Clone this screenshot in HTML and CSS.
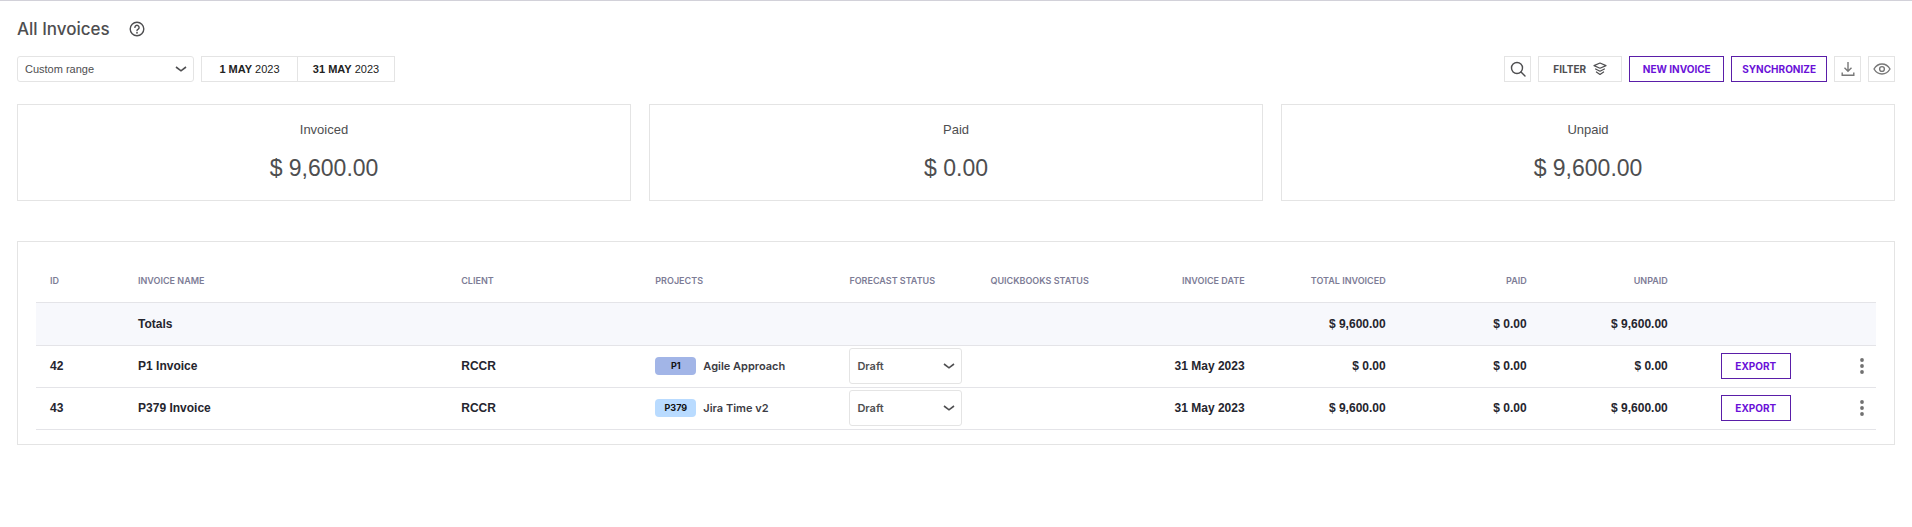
FILE: index.html
```html
<!DOCTYPE html>
<html lang="en">
<head>
<meta charset="utf-8">
<meta name="viewport" content="width=device-width, initial-scale=1">
<title>All Invoices</title>
<link rel="stylesheet" href="styles.css">
</head>
<body>
<main class="page">
  <header class="title-bar">
    <h1 class="title">All Invoices</h1>
    <button class="help" type="button" aria-label="Help">
      <svg width="16" height="16" viewBox="0 0 16 16" fill="none" stroke="currentColor" stroke-width="1.4" stroke-linecap="round"><circle cx="8" cy="8" r="6.8"/><path d="M5.9 6.4a2.1 2.1 0 1 1 3.3 1.7C8.400 8.600 8 8.900 8 9.600"/><circle cx="8" cy="11.800" r=".3"/></svg>
    </button>
  </header>

  <div class="toolbar">
    <span class="select-wrap range">
      <select class="select" aria-label="Date range"><option>Custom range</option></select>
      <svg class="chevron" width="12" height="12" viewBox="0 0 12 12"><path d="M1 4 6 7.800 11 4"/></svg>
    </span>
    <div class="dates">
      <button class="date" type="button"><b>1 MAY</b> 2023</button>
      <button class="date" type="button"><b>31 MAY</b> 2023</button>
    </div>
    <div class="actions">
      <button class="btn icon-btn" type="button" aria-label="Search">
        <svg width="16" height="16" viewBox="0 0 16 16" fill="none" stroke="currentColor" stroke-width="1.400" stroke-linecap="round"><circle cx="7" cy="7" r="5.500"/><path d="m11 11 4 4"/></svg>
      </button>
      <button class="btn filter" type="button">FILTER
        <svg width="14" height="14" viewBox="0 0 14 14" fill="none" stroke="currentColor" stroke-width="1.200" stroke-linejoin="round" stroke-linecap="round"><path d="M7 1 13 3.600 7 6.200 1 3.600z"/><path d="M2.600 7 7 9.200 11.400 7M3.400 10 7 12.400l3.600-2.400"/></svg>
      </button>
      <button class="btn primary action" type="button">NEW INVOICE</button>
      <button class="btn primary action" type="button">SYNCHRONIZE</button>
      <button class="btn icon-btn muted" type="button" aria-label="Download">
        <svg width="14" height="16" viewBox="0 0 14 16" fill="none" stroke="currentColor" stroke-width="1.400"><path d="M7 1v9M3.500 6.800 7 10.200l3.500-3.400M1.200 11.500v2.800h11.600v-2.800"/></svg>
      </button>
      <button class="btn icon-btn muted" type="button" aria-label="Visible columns">
        <svg width="18" height="14" viewBox="0 0 18 14" fill="none" stroke="currentColor" stroke-width="1.400"><path d="M1 7c2-3.300 4.700-5 8-5s6 1.700 8 5c-2 3.300-4.700 5-8 5S3 10.300 1 7z"/><circle cx="9" cy="7" r="2.400"/></svg>
      </button>
    </div>
  </div>

  <section class="cards" aria-label="Summary">
    <div class="card"><h2 class="card-label">Invoiced</h2><p class="card-value">$ 9,600.00</p></div>
    <div class="card"><h2 class="card-label">Paid</h2><p class="card-value">$ 0.00</p></div>
    <div class="card"><h2 class="card-label">Unpaid</h2><p class="card-value">$ 9,600.00</p></div>
  </section>

  <section class="panel">
    <table class="table">
      <colgroup><col class="c-id"><col class="c-name"><col class="c-wide"><col class="c-wide"><col class="c-std"><col class="c-std"><col class="c-std"><col class="c-std"><col class="c-std"><col class="c-std"><col class="c-export"><col class="c-menu"></colgroup>
      <thead>
        <tr><th>ID</th><th>INVOICE NAME</th><th>CLIENT</th><th>PROJECTS</th><th>FORECAST STATUS</th><th>QUICKBOOKS STATUS</th><th class="num">INVOICE DATE</th><th class="num">TOTAL INVOICED</th><th class="num">PAID</th><th class="num">UNPAID</th><td></td><td></td></tr>
      </thead>
      <tbody>
        <tr class="totals"><td></td><td>Totals</td><td></td><td></td><td></td><td></td><td></td><td class="num">$ 9,600.00</td><td class="num">$ 0.00</td><td class="num">$ 9,600.00</td><td></td><td></td></tr>
        <tr>
          <td>42</td><td>P1 Invoice</td><td>RCCR</td>
          <td><span class="project"><span class="badge indigo">P1</span>Agile Approach</span></td>
          <td class="status"><span class="select-wrap"><select class="select tall" aria-label="Forecast status of invoice 42"><option>Draft</option></select><svg class="chevron" width="12" height="12" viewBox="0 0 12 12"><path d="M1 4 6 7.800 11 4"/></svg></span></td>
          <td></td><td class="num">31 May 2023</td><td class="num">$ 0.00</td><td class="num">$ 0.00</td><td class="num">$ 0.00</td>
          <td class="export"><button class="btn primary" type="button">EXPORT</button></td>
          <td class="menu"><button class="dots" type="button" aria-label="More actions for invoice 42"><svg width="4" height="16" viewBox="0 0 4 16"><circle cx="2" cy="2" r="1.900"/><circle cx="2" cy="8" r="1.900"/><circle cx="2" cy="14" r="1.900"/></svg></button></td>
        </tr>
        <tr>
          <td>43</td><td>P379 Invoice</td><td>RCCR</td>
          <td><span class="project"><span class="badge sky">P379</span>Jira Time v2</span></td>
          <td class="status"><span class="select-wrap"><select class="select tall" aria-label="Forecast status of invoice 43"><option>Draft</option></select><svg class="chevron" width="12" height="12" viewBox="0 0 12 12"><path d="M1 4 6 7.800 11 4"/></svg></span></td>
          <td></td><td class="num">31 May 2023</td><td class="num">$ 9,600.00</td><td class="num">$ 0.00</td><td class="num">$ 9,600.00</td>
          <td class="export"><button class="btn primary" type="button">EXPORT</button></td>
          <td class="menu"><button class="dots" type="button" aria-label="More actions for invoice 43"><svg width="4" height="16" viewBox="0 0 4 16"><circle cx="2" cy="2" r="1.900"/><circle cx="2" cy="8" r="1.900"/><circle cx="2" cy="14" r="1.900"/></svg></button></td>
        </tr>
      </tbody>
    </table>
  </section>
</main>
</body>
</html>
```
FILE: styles.css
```css
* { box-sizing: border-box; }

body {
  margin: 0;
  background: #fff;
  color: #4e4e50;
  font-family: "Liberation Sans", Arial, sans-serif;
  font-size: 11px;
}

button, select { font: inherit; color: inherit; }
svg { display: block; flex: none; }

.title, .btn, .project, .table th, .tall {
  font-family: Inter, "Liberation Sans", sans-serif;
}

.page {
  border-top: 1px solid #d2d1d9;
  padding: 14px 17px;
}

.title-bar {
  display: flex;
  align-items: center;
  gap: 19px;
  height: 27px;
}
.title {
  margin: 0;
  font-size: 17px;
  font-weight: 500;
}
.help {
  padding: 0;
  border: 0;
  background: none;
}

.toolbar {
  display: flex;
  align-items: center;
  gap: 7px;
  margin-top: 14px;
}

.select-wrap {
  display: block;
  position: relative;
}
.range { width: 177px; }
.select {
  appearance: none;
  display: block;
  width: 100%;
  height: 26px;
  padding: 0 24px 0 7px;
  border: 1px solid #e4e4e4;
  border-radius: 3px;
  background: #fff;
}
.chevron {
  position: absolute;
  right: 7px;
  top: calc(50% - 6px);
  pointer-events: none;
  fill: none;
  stroke: #4e4e50;
  stroke-width: 1.6;
}

.dates { display: flex; }
.date {
  width: 97px;
  height: 26px;
  padding: 0;
  border: 1px solid #e4e4e4;
  background: #fff;
  color: #222;
}
.date + .date { border-left: 0; }

.actions {
  display: flex;
  gap: 7px;
  margin-left: auto;
}
.btn {
  display: inline-flex;
  align-items: center;
  justify-content: center;
  gap: 7px;
  height: 26px;
  padding: 0 10px;
  border: 1px solid #e4e4e4;
  background: #fff;
  font-size: 10px;
  font-weight: 700;
}
.icon-btn {
  width: 27px;
  padding: 0;
}
.muted { color: #777; }
.filter { width: 84px; }
.primary {
  min-width: 70px;
  border-color: #5a1ea8;
  color: #6a11d8;
}
.action { min-width: 95px; }

.cards {
  display: grid;
  grid-template-columns: repeat(3, 1fr);
  gap: 18px;
  margin-top: 22px;
}
.card {
  padding: 17px 16px 18px;
  border: 1px solid #e4e4e4;
  text-align: center;
}
.card-label {
  margin: 0;
  font-size: 13px;
  line-height: 16px;
  font-weight: 400;
}
.card-value {
  margin: 16px 0 0;
  font-size: 23px;
  line-height: 28px;
}

.panel {
  margin-top: 40px;
  padding: 18px 18px 14px;
  border: 1px solid #e4e4e4;
}
.table {
  width: 100%;
  table-layout: fixed;
  border-collapse: collapse;
  color: #25252e;
  font-size: 12px;
  font-weight: 700;
}
.c-id { width: 88px; }
.c-name { width: 323px; }
.c-wide { width: 194px; }
.c-std { width: 141px; }
.c-export { width: 148px; }
.c-menu { width: 46px; }

.table th, .table td {
  height: 42px;
  padding: 0 14px;
  border-bottom: 1px solid #e4e4e8;
  text-align: left;
  white-space: nowrap;
}
.table .totals td { height: 43px; }
.table th {
  color: #7d7c96;
  font-size: 9px;
  font-weight: 600;
}
.table .num { text-align: right; }
.totals { background: #f7f8fc; }

.project {
  display: flex;
  align-items: center;
  gap: 7px;
  color: #3c3c44;
  font-size: 11px;
  font-weight: 600;
}
.badge {
  width: 41px;
  border-radius: 4px;
  color: #111;
  font-size: 9px;
  font-weight: 700;
  line-height: 18px;
  text-align: center;
}
.indigo { background: #a2b5e7; }
.sky { background: #b9dbff; }

.tall {
  height: 36px;
  color: #4e4e50;
  font-size: 11px;
  font-weight: 600;
}
.table .export { padding: 0; text-align: center; }
.table .menu { padding: 0 12px 0 0; }
.dots {
  display: block;
  margin-left: auto;
  padding: 0;
  border: 0;
  background: none;
  fill: #717171;
}
```
